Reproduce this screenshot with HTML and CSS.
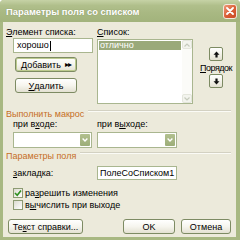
FILE: index.html
```html
<!DOCTYPE html>
<html lang="ru">
<head>
<meta charset="utf-8">
<link rel="stylesheet" href="styles.css">
</head>
<body>
<div class="window">
  <div class="titlebar">
    <span class="title">Параметры поля со списком</span>
    <span class="close">
      <svg width="8" height="8" viewBox="0 0 8 8"><path d="M1 1 L7 7 M7 1 L1 7" stroke="#fff" stroke-width="1.8" stroke-linecap="round"/></svg>
    </span>
  </div>
  <div class="frame">
    <div class="top">
      <div class="col-left">
        <div class="label"><u>Э</u>лемент списка:</div>
        <div class="input field-item">хорошо<span class="caret"></span></div>
        <div class="btn btn-default btn-add"><span><u>Д</u>обавить</span><span class="chev">▸▸</span></div>
        <div class="btn btn-del"><u>У</u>далить</div>
      </div>
      <div class="col-mid">
        <div class="label"><u>С</u>писок:</div>
        <div class="listbox">
          <div class="items"><div class="item sel">отлично</div></div>
          <div class="scroll">
            <div class="sarrow"><svg width="6" height="4" viewBox="0 0 6 4"><path d="M0.5 3.5 L3 1 L5.5 3.5" fill="none" stroke="#c6cbbd" stroke-width="1.2"/></svg></div>
            <div class="sarrow"><svg width="6" height="4" viewBox="0 0 6 4"><path d="M0.5 0.5 L3 3 L5.5 0.5" fill="none" stroke="#c6cbbd" stroke-width="1.2"/></svg></div>
          </div>
        </div>
      </div>
      <div class="col-right">
        <div class="sbtn"><svg width="7" height="7" viewBox="0 0 7 7"><path d="M3.5 0.5 L6.5 3.8 H4.6 V6.5 H2.4 V3.8 H0.5 Z" fill="#111"/></svg></div>
        <div class="order"><u>П</u>орядок</div>
        <div class="sbtn"><svg width="7" height="7" viewBox="0 0 7 7"><path d="M3.5 6.5 L6.5 3.2 H4.6 V0.5 H2.4 V3.2 H0.5 Z" fill="#111"/></svg></div>
      </div>
    </div>

    <div class="group group-macro"><span class="group-text">Выполнить макрос</span><span class="group-line"></span></div>
    <div class="pair">
      <div class="label">при в<u>х</u>оде:</div>
      <div class="label">при в<u>ы</u>ходе:</div>
    </div>
    <div class="pair combos">
      <div class="combo combo-1"><span class="combo-btn"><svg width="6" height="4" viewBox="0 0 6 4"><path d="M0.6 0.6 L3 3 L5.4 0.6" fill="none" stroke="#fff" stroke-width="1.4"/></svg></span></div>
      <div class="combo"><span class="combo-btn"><svg width="6" height="4" viewBox="0 0 6 4"><path d="M0.6 0.6 L3 3 L5.4 0.6" fill="none" stroke="#fff" stroke-width="1.4"/></svg></span></div>
    </div>

    <div class="group group-field"><span class="group-text">Параметры поля</span><span class="group-line"></span></div>
    <div class="pair bookmark">
      <div class="label"><u>з</u>акладка:</div>
      <div class="input field-bm">ПолеСоСписком1</div>
    </div>

    <div class="check check-1">
      <span class="box checked"><svg width="8" height="8" viewBox="0 0 8 8"><path d="M1 4 L3.2 6.2 L7 1.5" fill="none" stroke="#2f8f1f" stroke-width="1.6"/></svg></span>
      <span>ра<u>з</u>решить изменения</span>
    </div>
    <div class="check check-2">
      <span class="box"></span>
      <span>в<u>ы</u>числить при выходе</span>
    </div>

    <div class="buttons">
      <div class="btn btn-help">Те<u>к</u>ст справки...</div>
      <div class="btn btn-ok">OK</div>
      <div class="btn btn-cancel">Отмена</div>
    </div>
  </div>
</div>
</body>
</html>
```

FILE: styles.css
```css
html, body {
  margin: 0;
  padding: 0;
}
body {
  width: 240px;
  height: 240px;
  overflow: hidden;
  font-family: "Liberation Sans", Arial, sans-serif;
  font-size: 9px;
  color: #000;
  background: #fff;
}
u { text-decoration: underline; text-underline-offset: 1px; }

.window {
  width: 240px;
  height: 240px;
  display: flex;
  flex-direction: column;
  background: #a8b882;
  border-radius: 4px 4px 0 0;
  overflow: hidden;
}

.titlebar {
  height: 22px;
  flex: none;
  display: flex;
  align-items: center;
  padding: 0 3px 0 6px;
  background: linear-gradient(#c6d2a6, #b0bf8b 25%, #a8b882 60%, #a2b37c);
  color: #fff;
}
.title {
  flex: 1;
  font-size: 9.4px;
  font-weight: bold;
  line-height: 12px;
  margin-top: 1px;
  text-shadow: 0 0 1px rgba(90, 100, 60, 0.5);
}
.close {
  width: 14px;
  height: 15px;
  box-sizing: border-box;
  border: 1px solid #f4e8dc;
  border-radius: 3px;
  background: linear-gradient(135deg, #ee9a78, #d95c34 55%, #c94a25);
  display: flex;
  align-items: center;
  justify-content: center;
}

.frame {
  flex: 1;
  margin: 0 4px 3px 3px;
  background: #eceadb;
  display: flex;
  flex-direction: column;
  padding: 0 5px 3px 3px;
}

.label {
  line-height: 12px;
  height: 12px;
  white-space: nowrap;
}

.top {
  display: flex;
  margin-top: 4px;
  margin-right: -5px;
}
.col-left {
  width: 91px;
  flex: none;
  display: flex;
  flex-direction: column;
}
.input {
  box-sizing: border-box;
  height: 15px;
  border: 1px solid #a9b68f;
  background: #fff;
  padding: 0 3px;
  line-height: 13px;
  white-space: nowrap;
  display: flex;
  align-items: center;
}
.field-item {
  margin-left: 7px;
  width: 80px;
}
.caret {
  display: inline-block;
  width: 1px;
  height: 10px;
  background: #000;
  margin-left: 1px;
}

.btn {
  box-sizing: border-box;
  height: 15px;
  border: 1px solid #7d8b63;
  border-radius: 3px;
  background: linear-gradient(#ffffff, #f6f5ee 50%, #e3e1d2);
  display: flex;
  align-items: center;
  justify-content: center;
  line-height: 12px;
  white-space: nowrap;
}
.btn-default {
  box-shadow: inset 0 0 0 1px #bccb8e;
}
.btn-add {
  margin: 4px 0 0 9px;
  width: 62px;
  gap: 4px;
}
.chev {
  font-size: 8px;
  letter-spacing: -1px;
}
.btn-del {
  margin: 6px 0 0 9px;
  width: 62px;
}

.col-mid {
  width: 96px;
  flex: none;
  display: flex;
  flex-direction: column;
}
.listbox {
  margin-top: 1px;
  height: 65px;
  box-sizing: border-box;
  border: 1px solid #a9b68f;
  background: #fff;
  display: flex;
}
.items {
  flex: 1;
  padding: 1px 1px 0 1px;
}
.item {
  height: 9px;
  line-height: 9px;
  padding-left: 1px;
}
.item.sel {
  background: #9aa97a;
  color: #fff;
}
.scroll {
  width: 10px;
  flex: none;
  background: #fbfbf8;
  display: flex;
  flex-direction: column;
  justify-content: space-between;
}
.sarrow {
  height: 9px;
  box-sizing: border-box;
  border: 1px solid #e4e6dc;
  border-radius: 2px;
  background: #f3f4ee;
  display: flex;
  align-items: center;
  justify-content: center;
}

.col-right {
  flex: 1;
  display: flex;
  flex-direction: column;
  align-items: center;
  padding: 21px 3px 0 6px;
}
.sbtn {
  box-sizing: border-box;
  width: 14px;
  height: 14px;
  border: 1px solid #7d8b63;
  border-radius: 2px;
  background: linear-gradient(#ffffff, #f4f3ea 50%, #e2e0d0);
  display: flex;
  align-items: center;
  justify-content: center;
}
.order {
  line-height: 12px;
  height: 12px;
  margin: 1px 0 0;
  letter-spacing: -0.5px;
  white-space: nowrap;
}

.group {
  display: flex;
  align-items: flex-start;
  line-height: 12px;
  height: 12px;
  white-space: nowrap;
}
.group-macro { margin-top: 4px; }
.group-field { margin-top: 2px; }
.group-text {
  color: #c66e25;
}
.group-line {
  flex: 1;
  margin: 2px 0 0 4px;
  height: 0;
  border-top: 1px solid #d3d1c2;
  border-bottom: 1px solid #fbfbf6;
}

.pair {
  display: grid;
  grid-template-columns: 84px 80px;
  padding-left: 7px;
}
.group-macro + .pair { margin-top: -2px; }
.combos { margin-top: 2px; }
.combo {
  box-sizing: border-box;
  height: 16px;
  width: 80px;
  border: 1px solid #a9b68f;
  background: #fff;
  display: flex;
  justify-content: flex-end;
  padding: 1px;
}
.combo-1 { width: 79px; }
.combo-btn {
  width: 10px;
  height: 12px;
  border-radius: 1px;
  background: linear-gradient(#b2c08f, #9cad78);
  display: flex;
  align-items: center;
  justify-content: center;
}

.bookmark {
  margin-top: 4px;
  align-items: center;
  height: 14px;
}
.field-bm {
  width: 80px;
  height: 14px;
  padding: 0 2px;
}

.check {
  display: flex;
  align-items: center;
  height: 10px;
  line-height: 12px;
  padding-left: 7px;
  gap: 2px;
  white-space: nowrap;
}
.check-1 { margin-top: 8px; }
.check-2 { margin-top: 2px; }
.box {
  box-sizing: border-box;
  width: 10px;
  height: 10px;
  border: 1px solid #8d9b72;
  background: linear-gradient(135deg, #dcdbd0, #fff);
  display: flex;
  align-items: center;
  justify-content: center;
}

.buttons {
  margin-top: auto;
  display: flex;
  padding-left: 2px;
}
.btn-help { width: 75px; }
.btn-ok { width: 52px; margin-left: auto; }
.btn-cancel { width: 50px; margin-left: 6px; }
```
